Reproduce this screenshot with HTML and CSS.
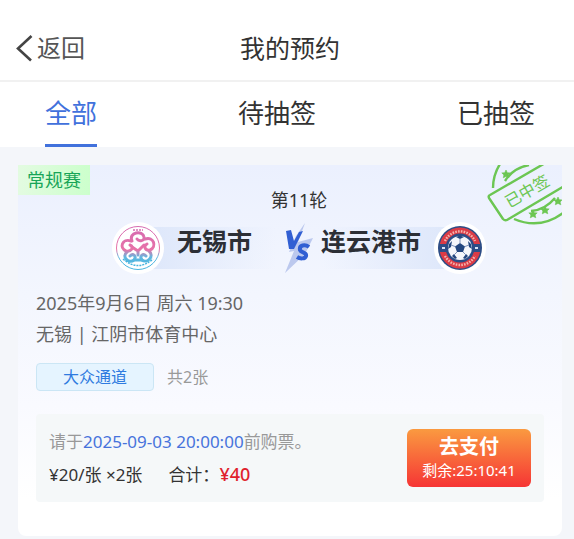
FILE: index.html
```
<!DOCTYPE html>
<html lang="zh-CN">
<head>
    <meta charset="UTF-8">
    <meta name="viewport" content="width=device-width, initial-scale=1.0">
    <title>我的预约</title>
    <link rel="stylesheet" href="styles.css">
</head>
<body>
    <header class="header">
        <a class="back" href="#">
            <svg class="back-icon" viewBox="0 0 18 28" fill="none" stroke="#444" stroke-width="2.6">
                <path d="M15.5 2 L2 14.5 L15 26.5"/>
            </svg>
            返回
        </a>
        <h1 class="title">我的预约</h1>
    </header>

    <nav class="tabs">
        <a class="tab active" href="#">全部</a>
        <a class="tab" href="#">待抽签</a>
        <a class="tab" href="#">已抽签</a>
    </nav>

    <main class="list">
        <article class="card">
            <span class="tag">常规赛</span>

            <!-- Stamp -->
            <svg class="stamp" viewBox="0 5 80 60" fill="none" stroke="#6cc653" stroke-width="2.4" stroke-linejoin="round">
                <path d="M11 28 Q11 15 18 4"/>
                <path d="M23 21 Q31 8 47 5"/>
                <path d="M32 59 Q58 70 81 53"/>
                <path d="M49 51 Q63 50 73 38"/>
                <path d="M84 -9 L8 35 Q6 36 7 38 L21 59 Q23 61 25 60 L84 25"/>
                <g fill="#6cc653" stroke="#6cc653" stroke-width="0.6">
                    <path id="star" d="M24 10 L25.3 12.7 L28.2 12.9 L26.1 14.9 L26.8 17.8 L24 16.4 L21.3 17.8 L21.9 14.9 L19.8 12.9 L22.7 12.7 Z"/>
                    <use href="#star" x="27" y="40"/>
                    <use href="#star" x="39" y="36"/>
                    <use href="#star" x="52" y="27"/>
                </g>
                <text class="stamp-text" x="45" y="37" text-anchor="middle" transform="rotate(-30 45 31)">已中签</text>
            </svg>

            <p class="round">第11轮</p>

            <div class="match">
                <div class="team home">
                    <svg class="logo" viewBox="0 0 52 52" fill="none">
                        <defs>
                            <linearGradient id="flower" gradientUnits="userSpaceOnUse" x1="0" y1="8" x2="0" y2="44">
                                <stop offset="0" stop-color="#d66bb0"/>
                                <stop offset="0.55" stop-color="#e873a8"/>
                                <stop offset="0.75" stop-color="#62b8e0"/>
                                <stop offset="1" stop-color="#45b4de"/>
                            </linearGradient>
                        </defs>
                        <circle cx="26" cy="26" r="26" fill="#fff"/>
                        <circle cx="26" cy="26" r="21.5" stroke="url(#flower)"/>
                        <g stroke="url(#flower)" stroke-width="3" stroke-linecap="round">
                            <path d="M20 19 C16 10 31 8 32 15 C33 19 27 20 25 17"/>
                            <path d="M33 17 C42 14 45 25 38 28 C33 29 31 24 35 22"/>
                            <path d="M19 19 C10 16 7 26 14 29 C19 30 23 25 18 23"/>
                            <path d="M37 29 C43 34 35 42 30 38 C27 34 31 31 34 34"/>
                            <path d="M15 30 C9 35 17 42 22 38 C25 34 21 31 18 34"/>
                            <path d="M20 25 L26 29 L32 23 M26 29 V33 M23 38 H30"/>
                        </g>
                        <path d="M21 8 H31" stroke="#d66bb0" stroke-width="1.5" stroke-dasharray="2 1"/>
                        <path d="M11 37 Q26 50 41 37" stroke="#45b4de" stroke-width="1.5" stroke-dasharray="2 1"/>
                    </svg>
                    <strong class="name">无锡市</strong>
                </div>

                <svg class="versus" viewBox="0 0 34 52">
                    <path d="M23 1 L16 20 L31 16 L23 32 L3 51 L12 29 L7 30 L14 14 Z" fill="#a9bae8" opacity="0.75"/>
                    <path d="M4 9 L9 8 L12 19 L17 10 L21 9 L12 27 L7 27 Z" fill="#315fd3"/>
                    <path d="M27 25 C23 22 17 23 18 28 C19 31 25 30 24 34 C23 37 18 37 15 35" fill="none" stroke="#315fd3" stroke-width="4"/>
                </svg>

                <div class="team away">
                    <strong class="name">连云港市</strong>
                    <svg class="logo" viewBox="0 0 52 52" fill="none">
                        <circle cx="26" cy="26" r="26" fill="#fff"/>
                        <circle cx="26" cy="26" r="22" fill="#2d4d86"/>
                        <circle cx="26" cy="26" r="17.5" stroke="#db3b46" stroke-width="6"/>
                        <path d="M5 22 H13 V30 H5 Z M39 22 H47 V30 H39 Z" fill="#2d4d86"/>
                        <path d="M8 26 H11 M41 26 H44" stroke="#d9e3f5" stroke-width="2"/>
                        <path d="M11 19 A16.5 16.5 0 0 1 41 19 M11 34 A17 17 0 0 0 41 34" stroke="#f4b4ad" stroke-width="2.4" stroke-dasharray="1.6 1.2"/>
                        <circle cx="26" cy="26" r="13.5" fill="#2d4d86"/>
                        <circle cx="26" cy="26" r="12" fill="#f5f7fb"/>
                        <g fill="#24477f">
                            <path d="M26 21 L31 24.5 L29 30 H23 L21 24.5 Z"/>
                            <path d="M22 15 L26 17 L30 15 L26 13.5 Z M15 22 L18 19 L17 25 L14 27 Z M37 22 L34 19 L35 25 L38 27 Z M18 34 L20 32 L23 36 L21 37 Z M34 34 L32 32 L29 36 L31 37 Z"/>
                        </g>
                        <path d="M26 21 V17 M31 24.5 L35 23 M29 30 L32 33 M23 30 L20 33 M21 24.5 L17 23" stroke="#7e93ba"/>
                    </svg>
                </div>
            </div>

            <p class="info">2025年9月6日 周六 19:30</p>
            <p class="info">无锡 | 江阴市体育中心</p>

            <div class="ticket">
                <span class="channel">大众通道</span>
                <span class="count">共2张</span>
            </div>

            <section class="payment">
                <div class="details">
                    <p class="deadline">请于<time>2025-09-03 20:00:00</time>前购票。</p>
                    <p class="price"><span>¥20/张 ×2张</span><span>合计：<b class="total">¥40</b></span></p>
                </div>
                <button class="pay-btn" type="button">
                    <span class="pay-label">去支付</span>
                    <span class="pay-time">剩余:25:10:41</span>
                </button>
            </section>
        </article>
    </main>
</body>
</html>
```
FILE: styles.css
```
* {
    margin: 0;
    padding: 0;
    box-sizing: border-box;
}

body {
    font-family: 'Noto Sans', 'Noto Sans CJK SC', sans-serif;
    background: #f4f6fa;
    color: #333;
}

a {
    color: inherit;
    text-decoration: none;
}

/* Header */
.header {
    display: grid;
    grid-template-columns: 1fr auto 1fr;
    align-items: center;
    padding: 30px 16px 14px;
    background: #fff;
    border-bottom: 2px solid #f1f1f1;
}

.back {
    display: flex;
    align-items: center;
    gap: 3px;
    font-size: 24px;
    line-height: 36px;
    color: #555;
}

.back-icon {
    width: 18px;
    height: 28px;
}

.title {
    padding-left: 6px;
    font-size: 25px;
    font-weight: 400;
    line-height: 36px;
}

/* Tabs */
.tabs {
    display: flex;
    justify-content: space-between;
    padding: 0 39px 0 45px;
    background: #fff;
}

.tab {
    padding: 13px 0;
    font-size: 26px;
    line-height: 36px;
    border-bottom: 3px solid transparent;
}

.tab.active {
    color: #4171dc;
    border-bottom-color: #4171dc;
}

/* Card */
.list {
    padding: 18px 12px 2px 18px;
}

.card {
    position: relative;
    overflow: hidden;
    padding: 0 18px 34px;
    border-radius: 0 0 8px 8px;
    background: linear-gradient(#ebf0fe, #f3f6fe 35%, #f9faff 65%, #fff 90%);
}

.tag {
    display: block;
    width: fit-content;
    margin-left: -18px;
    padding: 0 9px;
    font-size: 18px;
    line-height: 30px;
    color: #18a558;
    background: linear-gradient(90deg, #e3fbe1, #ccffcc);
}

.stamp {
    position: absolute;
    top: 0;
    right: 0;
    width: 80px;
    height: 60px;
}

.stamp-text {
    font-size: 16px;
    font-weight: 400;
    fill: #6cc653;
    stroke: none;
}

.round {
    padding-left: 18px;
    font-size: 18px;
    line-height: 26px;
    margin-top: -8px;
    text-align: center;
}

.match {
    display: flex;
    justify-content: center;
    gap: 6px;
    margin-top: 9px;
    padding-left: 18px;
}

.team {
    display: flex;
    align-items: flex-start;
    width: 164px;
    background: linear-gradient(90deg, transparent 26px, #dce6fa 26px, transparent) 0 5px / 100% 42px no-repeat;
}

.team.home {
    gap: 13px;
}

.team.away {
    justify-content: flex-end;
    gap: 13px;
    background-image: linear-gradient(270deg, transparent 26px, #dce6fa 26px, transparent);
}

.logo {
    flex: none;
    width: 52px;
    height: 52px;
}

.name {
    font-size: 25px;
    font-weight: 700;
    line-height: 38px;
    white-space: nowrap;
    color: #2c2f36;
}

.versus {
    flex: none;
    width: 34px;
    height: 52px;
}

.info {
    font-size: 18px;
    line-height: 31px;
    color: #666;
}

.match + .info {
    margin-top: 14px;
}

.ticket {
    display: flex;
    align-items: center;
    gap: 13px;
    margin-top: 13px;
}

.channel {
    width: 118px;
    font-size: 16px;
    line-height: 26px;
    text-align: center;
    color: #2f7be0;
    background: #e5f4ff;
    border: 1px solid #cbe6f5;
    border-radius: 4px;
}

.count {
    font-size: 16px;
    line-height: 26px;
    color: #999;
}

/* Payment */
.payment {
    display: flex;
    align-items: center;
    justify-content: space-between;
    margin-top: 23px;
    padding: 11px 13px;
    background: #f5f8f9;
    border-radius: 4px;
}

.deadline,
.price {
    font-size: 17px;
    line-height: 33px;
}

.deadline {
    color: #999;
}

.deadline time {
    color: #4773dc;
}

.price {
    display: flex;
    gap: 26px;
}

.total {
    font-size: 18px;
    font-weight: 500;
    color: #e01f2d;
}

.pay-btn {
    display: flex;
    flex-direction: column;
    align-items: center;
    width: 124px;
    padding: 5px 0 6px;
    font-family: inherit;
    color: #fff;
    background: linear-gradient(#fa9a40, #f63535);
    border: none;
    border-radius: 6px;
    cursor: pointer;
}

.pay-label {
    font-size: 20px;
    font-weight: 700;
    line-height: 26px;
}

.pay-time {
    font-size: 15px;
    line-height: 21px;
}
```
